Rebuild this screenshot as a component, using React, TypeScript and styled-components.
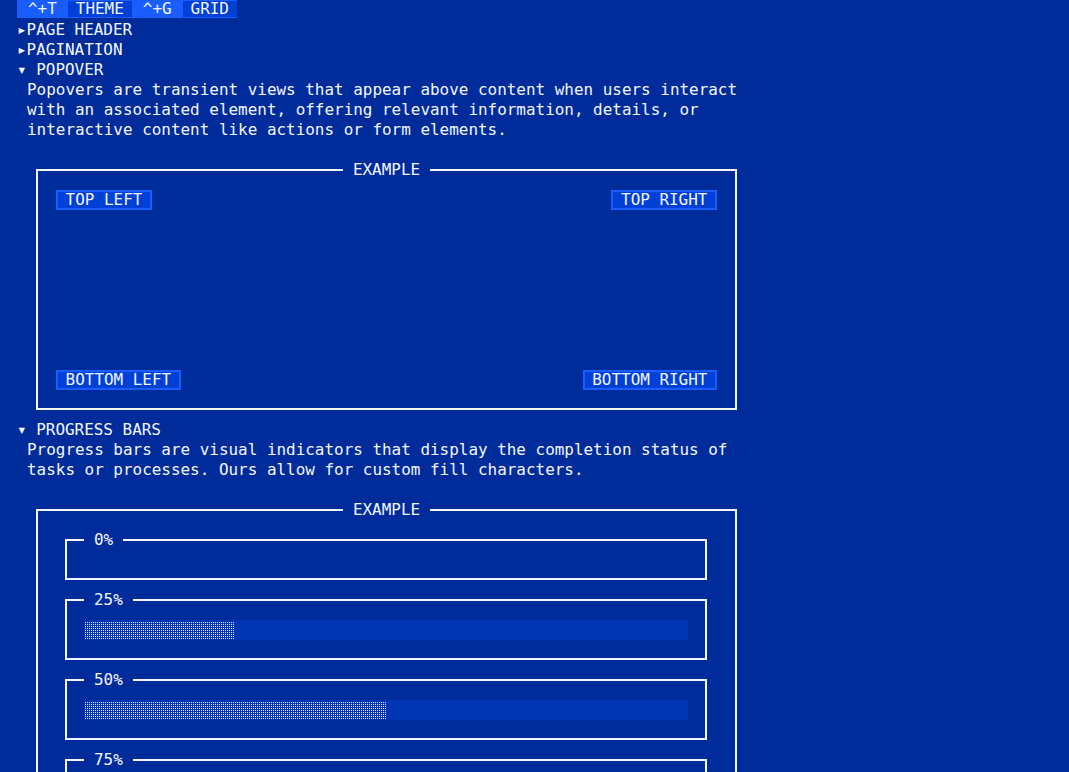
import React from "react";
import styled, { createGlobalStyle } from "styled-components";

const BG = "#002b9b";
const FG = "#f4f7ff";
const BRIGHT = "#1a5dff";
const BUTTON = "#0040d6";
const TRACK = "#0036b4";

const Global = createGlobalStyle`
  html, body {
    margin: 0;
    padding: 0;
    background: ${BG};
    color: ${FG};
    font-family: "DejaVu Sans Mono", "Liberation Mono", monospace;
    font-size: 15.95px;
    line-height: 20px;
  }
  * { box-sizing: border-box; }
`;

const Page = styled.main`
  padding-left: 17px;
  width: 760px;
`;

const ActionBar = styled.nav`
  display: inline-flex;
  align-items: stretch;
  height: 18px;
  background: ${BRIGHT};
  margin-bottom: 1px;
  vertical-align: top;
`;

const Hotkey = styled.span`
  padding: 0 11px;
  line-height: 18px;
`;

const ActionLabel = styled.span`
  background: ${BUTTON};
  margin: 1px 0;
  padding: 0 8px;
  line-height: 16px;
`;

const TreeRow = styled.div`
  white-space: pre;
  line-height: 20px;
`;

const Description = styled.p`
  margin: 0 0 20px 10px;
  max-width: 76ch;
  line-height: 20px;
`;

const ExampleBox = styled.fieldset`
  margin: 0 0 10px 19px;
  width: 701px;
  border: 2px solid ${FG};
  padding: 10px 18px 18px 18px;
  min-width: 0;
`;

const CenterLegend = styled.legend`
  margin: 0 auto;
  padding: 0 10px;
  line-height: 20px;
`;

const PopoverStage = styled.div`
  height: 200px;
  display: flex;
  flex-direction: column;
  justify-content: space-between;
`;

const PopoverRow = styled.div`
  display: flex;
  justify-content: space-between;
`;

const Trigger = styled.button`
  font: inherit;
  line-height: 20px;
  height: 20px;
  color: ${FG};
  background: ${BUTTON};
  border: none;
  box-shadow: inset 0 0 0 2px ${BRIGHT};
  padding: 0 9.6px;
  cursor: pointer;
`;

const ProgressFrame = styled.fieldset`
  margin: 0 10px 10px 9px;
  border: 2px solid ${FG};
  padding: 10px 17px 18px 17px;
  min-width: 0;
`;

const StartLegend = styled.legend`
  margin: 0;
  padding: 0 10px;
  line-height: 20px;
`;

const Track = styled.div`
  height: 20px;
  background: ${TRACK};
  display: flex;
`;

const Fill = styled.div`
  height: 18px;
  margin-top: 1px;
  background-color: ${TRACK};
  background-image: conic-gradient(from 90deg at 1px 1px, #e4ecff 0 25%, transparent 0);
  background-size: 2px 2px;
`;

function ProgressBar({ value }: { value: number }) {
  if (value <= 0) return null;
  return (
    <Track>
      <Fill style={{ width: `${value}%` }} />
    </Track>
  );
}

const progress = [0, 25, 50, 75, 100];

export default function App() {
  return (
    <>
      <Global />
      <Page>
        <ActionBar>
          <Hotkey>^+T</Hotkey>
          <ActionLabel>THEME</ActionLabel>
          <Hotkey>^+G</Hotkey>
          <ActionLabel>GRID</ActionLabel>
        </ActionBar>
        <TreeRow>▸PAGE HEADER</TreeRow>
        <TreeRow>▸PAGINATION</TreeRow>
        <TreeRow>▾ POPOVER</TreeRow>
        <Description>
          Popovers are transient views that appear above content when users interact with an
          associated element, offering relevant information, details, or interactive content
          like actions or form elements.
        </Description>
        <ExampleBox>
          <CenterLegend>EXAMPLE</CenterLegend>
          <PopoverStage>
            <PopoverRow>
              <Trigger>TOP LEFT</Trigger>
              <Trigger>TOP RIGHT</Trigger>
            </PopoverRow>
            <PopoverRow>
              <Trigger>BOTTOM LEFT</Trigger>
              <Trigger>BOTTOM RIGHT</Trigger>
            </PopoverRow>
          </PopoverStage>
        </ExampleBox>
        <TreeRow>▾ PROGRESS BARS</TreeRow>
        <Description>
          Progress bars are visual indicators that display the completion status of tasks or
          processes. Ours allow for custom fill characters.
        </Description>
        <ExampleBox>
          <CenterLegend>EXAMPLE</CenterLegend>
          {progress.map((p) => (
            <ProgressFrame key={p}>
              <StartLegend>{p}%</StartLegend>
              <ProgressBar value={p} />
            </ProgressFrame>
          ))}
        </ExampleBox>
      </Page>
    </>
  );
}
